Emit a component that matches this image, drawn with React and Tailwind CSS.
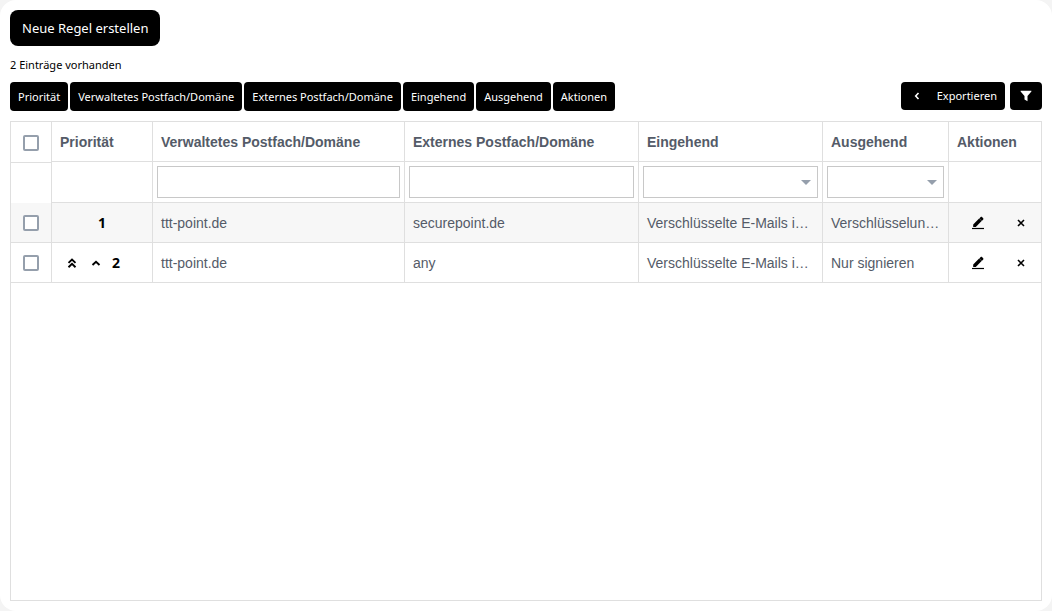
import React, { useState } from "react";

const columns = [
  "Priorität",
  "Verwaltetes Postfach/Domäne",
  "Externes Postfach/Domäne",
  "Eingehend",
  "Ausgehend",
  "Aktionen",
];

const rules = [
  {
    id: 1,
    managed: "ttt-point.de",
    external: "securepoint.de",
    incoming: "Verschlüsselte E-Mails i…",
    outgoing: "Verschlüsselun…",
  },
  {
    id: 2,
    managed: "ttt-point.de",
    external: "any",
    incoming: "Verschlüsselte E-Mails i…",
    outgoing: "Nur signieren",
  },
];

const line = "border-[#dfdfdf]";
const cell = `${line} border-b border-r px-2 last:border-r-0`;
const toolButton =
  "flex items-center rounded bg-black px-2 text-[11px] leading-4 text-white";

function Check({ label }) {
  return (
    <input
      type="checkbox"
      aria-label={label}
      className="block size-4 appearance-none rounded-xs border-2 border-[#959fac] bg-white checked:bg-[#959fac]"
    />
  );
}

function FilterSelect({ label }) {
  return (
    <div className="relative">
      <select
        aria-label={label}
        className="block h-8 w-full appearance-none border border-[#c8c8c8] bg-white px-2"
      >
        <option value=""></option>
        <option>Verschlüsselung</option>
        <option>Nur signieren</option>
      </select>
      <svg
        viewBox="0 0 10 5"
        className="pointer-events-none absolute right-[7px] top-3.5 h-[5px] w-2.5 fill-[#959fac]"
      >
        <path d="M0 0h10L5 5z" />
      </svg>
    </div>
  );
}

function PencilIcon() {
  return (
    <svg viewBox="0 0 14 14" className="size-3.5">
      <path d="M1 12.500h12" stroke="#000" strokeWidth="1.2" />
      <path d="M2.200 11V8.400l5.900-5.800 2.500 2.500L4.800 11z" />
      <path d="M8.300 2.400l1.400-1.300c.4-.4.9-.4 1.300 0l1.200 1.200c.4.4.4.9 0 1.300L10.800 4.900z" />
    </svg>
  );
}

export default function App() {
  const [shown, setShown] = useState(true);

  return (
    <div className="min-h-screen bg-[#f4f4f4] font-['Noto_Sans','Open_Sans',sans-serif] text-black">
      <main className="flex min-h-screen flex-col rounded-2xl bg-white p-2.5">
        <div>
          <button className="h-9 rounded-lg bg-black px-3 pt-0.5 text-[13px] text-white">
            Neue Regel erstellen
          </button>
        </div>
        <p className="mt-[11px] text-[11px] leading-4">2 Einträge vorhanden</p>

        <div className="mt-[9px] flex items-start justify-between">
          <div className="flex gap-0.5">
            {columns.map((name) => (
              <button key={name} className={`${toolButton} h-[29px]`}>
                {name}
              </button>
            ))}
          </div>
          <div className="flex gap-[5px]">
            <button className={`${toolButton} h-7 gap-3`}>
              <svg viewBox="0 0 16 16" className="size-4" fill="none" stroke="#fff" strokeWidth="1.6">
                <path d="M9.500 5L6.700 8l2.800 3" />
              </svg>
              Exportieren
            </button>
            <button
              aria-label="Filter"
              onClick={() => setShown(!shown)}
              className={`${toolButton} h-7 w-8 justify-center`}
            >
              <svg viewBox="0 0 12 12" className="size-3" fill="#fff">
                <path d="M.6.8h10.800v.6L7.500 6v5.200L4.500 9.400V6L.6 1.400z" />
              </svg>
            </button>
          </div>
        </div>

        <div className={`mt-2.5 grow border ${line}`}>
          <table className="w-full table-fixed border-separate border-spacing-0 text-left font-['Liberation_Sans',Arial,sans-serif] text-sm text-[#545b68]">
            <colgroup>
              <col className="w-[41px]" />
              <col className="w-[101px]" />
              <col className="w-[252px]" />
              <col className="w-[234px]" />
              <col className="w-[184px]" />
              <col className="w-[126px]" />
              <col className="w-[92px]" />
            </colgroup>
            <thead>
              <tr className="h-10">
                <th className={`${line} border-r px-3 pt-0.5`}>
                  <Check label="Alle auswählen" />
                </th>
                {columns.map((name) => (
                  <th key={name} className={`${cell} truncate`}>
                    {name}
                  </th>
                ))}
              </tr>
              {shown && (
                <tr className="h-[41px]">
                  <td className={`${line} border-r border-t`} />
                  <td className={cell} />
                  <td className={`${line} border-b border-r px-1`}>
                    <input
                      aria-label="Verwaltetes Postfach/Domäne filtern"
                      className="block h-8 w-full border border-[#c8c8c8] px-2"
                    />
                  </td>
                  <td className={`${line} border-b border-r px-1`}>
                    <input
                      aria-label="Externes Postfach/Domäne filtern"
                      className="block h-8 w-full border border-[#c8c8c8] px-2"
                    />
                  </td>
                  <td className={`${line} border-b border-r px-1`}>
                    <FilterSelect label="Eingehend filtern" />
                  </td>
                  <td className={`${line} border-b border-r px-1`}>
                    <FilterSelect label="Ausgehend filtern" />
                  </td>
                  <td className={cell} />
                </tr>
              )}
            </thead>
            <tbody>
              {rules.map((rule) => (
                <tr key={rule.id} className="h-10 odd:bg-[#f7f7f7]">
                  <td className={`${line} border-b border-r px-3`}>
                    <Check label={`Regel ${rule.id} auswählen`} />
                  </td>
                  <td className={cell}>
                    <div
                      className={`flex items-center font-['Noto_Sans','Open_Sans',sans-serif] font-bold text-black ${
                        rule.id > 1 ? "justify-start" : "justify-center"
                      }`}
                    >
                      {rule.id > 1 && (
                        <div className="mr-1 flex">
                          <button aria-label="An den Anfang" className="flex w-6 justify-center">
                            <svg viewBox="0 0 10 10" className="size-2.5" fill="none" stroke="#000" strokeWidth="1.9">
                              <path d="M1.500 4.900L5 1.600l3.500 3.300M1.500 9.200L5 5.900l3.500 3.300" />
                            </svg>
                          </button>
                          <button aria-label="Nach oben" className="flex w-6 justify-center">
                            <svg viewBox="0 0 10 10" className="size-2.5" fill="none" stroke="#000" strokeWidth="1.9">
                              <path d="M1.500 7L5 3.800 8.500 7" />
                            </svg>
                          </button>
                        </div>
                      )}
                      {rule.id}
                    </div>
                  </td>
                  <td className={`${cell} truncate`}>{rule.managed}</td>
                  <td className={`${cell} truncate`}>{rule.external}</td>
                  <td className={`${cell} truncate`}>{rule.incoming}</td>
                  <td className={`${cell} truncate`}>{rule.outgoing}</td>
                  <td className={cell}>
                    <div className="flex items-center justify-between pl-3.5 pr-2">
                      <button aria-label="Bearbeiten">
                        <PencilIcon />
                      </button>
                      <button aria-label="Löschen">
                        <svg viewBox="0 0 8 8" className="size-2" stroke="#000" strokeWidth="1.6">
                          <path d="M1 1l6 6M7 1L1 7" />
                        </svg>
                      </button>
                    </div>
                  </td>
                </tr>
              ))}
            </tbody>
          </table>
        </div>
      </main>
    </div>
  );
}
